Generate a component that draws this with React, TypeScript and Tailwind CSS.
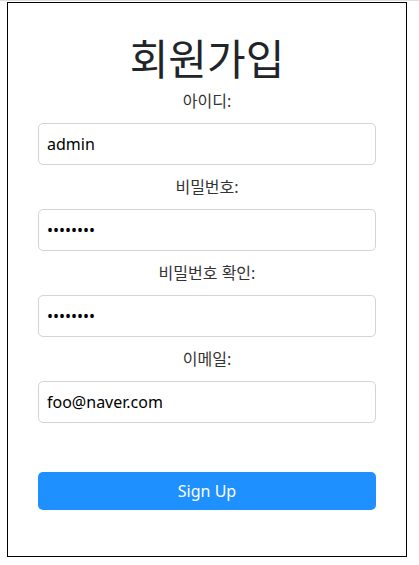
import React from "react";

const font = { fontFamily: '"Noto Sans", "Noto Sans CJK KR", sans-serif' };

function Field({ label, type, value }: { label: string; type: string; value: string }) {
  return (
    <>
      <label className="mt-[10px] mb-[10px] h-[24px] text-[16px] leading-[24px] text-[#333333]">{label}</label>
      <input
        type={type}
        defaultValue={value}
        readOnly
        className="w-full h-[42px] rounded-[5px] border border-[#d4d4d4] px-[8px] text-[16px] text-black outline-none"
        style={font}
      />
    </>
  );
}

export default function App() {
  return (
    <div className="min-h-screen bg-white" style={font}>
      <div className="h-px bg-[#dddddd]" />
      <div className="ml-[7px] mt-px w-[400px] h-[555px] border border-black flex flex-col items-center px-[30px]">
        <h1 className="mt-[30px] mb-[-2px] text-[42px] leading-[48px] text-[#212529]" style={{ fontFamily: '"Noto Sans CJK KR", sans-serif' }}>
          회원가입
        </h1>
        <Field label="아이디:" type="text" value="admin" />
        <Field label="비밀번호:" type="password" value="12345678" />
        <Field label="비밀번호 확인:" type="password" value="12345678" />
        <Field label="이메일:" type="text" value="foo@naver.com" />
        <button className="mt-[49px] w-full h-[38px] rounded-[5px] bg-[#1e90ff] text-white text-[16px] leading-[24px]">
          Sign Up
        </button>
      </div>
    </div>
  );
}
